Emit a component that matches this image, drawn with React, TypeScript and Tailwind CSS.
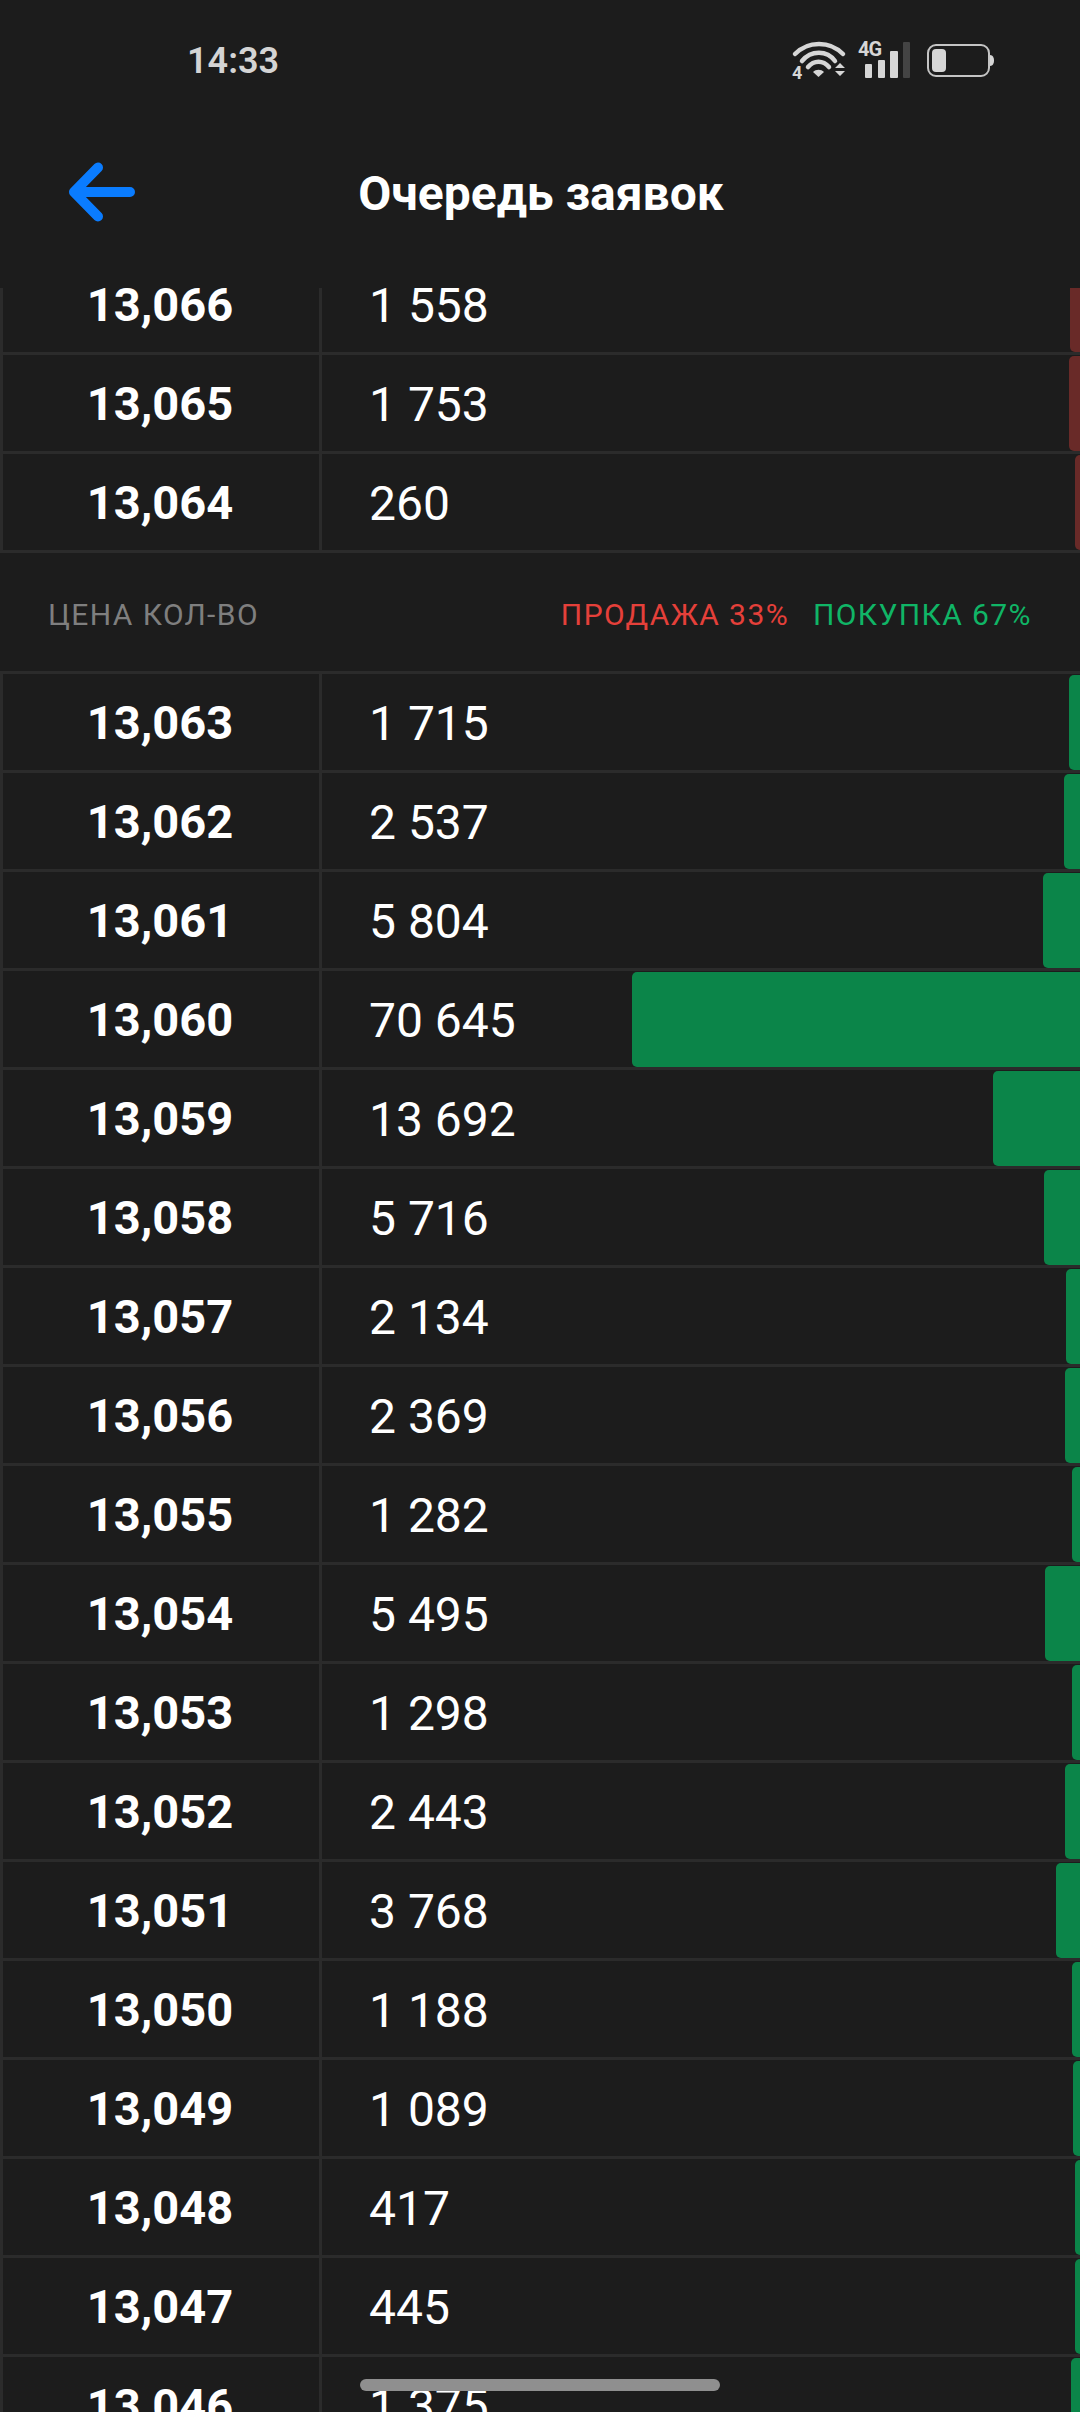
import React from "react";

const MAX_QTY = 70645;
const MAX_BAR = 448;

const SELLS = [
  { price: "13,066", qty: "1 558" },
  { price: "13,065", qty: "1 753" },
  { price: "13,064", qty: "260" },
];

const BUYS = [
  { price: "13,063", qty: "1 715" },
  { price: "13,062", qty: "2 537" },
  { price: "13,061", qty: "5 804" },
  { price: "13,060", qty: "70 645" },
  { price: "13,059", qty: "13 692" },
  { price: "13,058", qty: "5 716" },
  { price: "13,057", qty: "2 134" },
  { price: "13,056", qty: "2 369" },
  { price: "13,055", qty: "1 282" },
  { price: "13,054", qty: "5 495" },
  { price: "13,053", qty: "1 298" },
  { price: "13,052", qty: "2 443" },
  { price: "13,051", qty: "3 768" },
  { price: "13,050", qty: "1 188" },
  { price: "13,049", qty: "1 089" },
  { price: "13,048", qty: "417" },
  { price: "13,047", qty: "445" },
  { price: "13,046", qty: "1 375" },
];

function barWidth(qty: string) {
  const n = Number(qty.replace(/\s/g, ""));
  return Math.max(5, Math.round((n / MAX_QTY) * MAX_BAR));
}

function Row({ price, qty, side }: { price: string; qty: string; side: "buy" | "sell" }) {
  return (
    <div className="relative flex h-[99px] shrink-0 border-b-[3px] border-[#2b2b2b]">
      <div className="flex w-[322px] shrink-0 items-center justify-center border-x-[3px] border-[#2b2b2b] pt-[3px] pr-[2px] text-[47px] font-bold text-white">
        {price}
      </div>
      <div className="flex flex-1 items-center pt-[3px] pl-[47px] text-[48px] text-white">{qty}</div>
      {/* volume bar */}
      <div
        className={
          side === "buy"
            ? "absolute top-[1px] right-0 bottom-0 rounded-l-[5px] bg-[#0b8549]"
            : "absolute top-[1px] right-0 bottom-0 rounded-l-[5px] bg-[#692a28]"
        }
        style={{ width: barWidth(qty) }}
      />
    </div>
  );
}

function StatusIcons() {
  return (
    <svg width="206" height="52" viewBox="0 -4 206 52" fill="none" className="shrink-0">
      {/* wifi */}
      <g stroke="#d6d6d6" strokeWidth="4.5" strokeLinecap="round">
        <path d="M5 15C18 1.5 40 1.5 53 15" />
        <path d="M12 22C21 11 37 11 45 22" />
        <path d="M18 28C24 21 33 21 39 28" />
      </g>
      <path d="M28.5 38L23 33C26 30 31 30 34 33Z" fill="#d6d6d6" />
      <text x="2" y="40" fontSize="18" fontWeight="700" fill="#d6d6d6" fontFamily="Roboto, sans-serif">
        4
      </text>
      <path d="M45 29L50 24L55 29Z M45 32H55L50 37Z" fill="#d6d6d6" />
      {/* cell signal */}
      <text x="68" y="17" fontSize="20" fontWeight="700" fill="#d6d6d6" fontFamily="Roboto, sans-serif" letterSpacing="-1">
        4G
      </text>
      <rect x="75" y="25" width="7" height="14" rx="1" fill="#d6d6d6" />
      <rect x="88" y="21" width="7" height="18" rx="1" fill="#d6d6d6" />
      <rect x="100" y="12" width="8" height="27" rx="1" fill="#d6d6d6" />
      <rect x="113" y="3" width="7" height="36" rx="1" fill="#444444" />
      {/* battery */}
      <rect x="138" y="6" width="61" height="31" rx="8" stroke="#c4c4c4" strokeWidth="2" />
      <rect x="142" y="10" width="14" height="23" rx="4" fill="#d6d6d6" />
      <path d="M200 16C203 16 204 19 204 21.5C204 24 203 27 200 27Z" fill="#d6d6d6" />
    </svg>
  );
}

export default function App() {
  return (
    <div className="relative flex h-[2412px] w-[1080px] flex-col overflow-hidden bg-[#1c1c1c] font-['Roboto',sans-serif]">
      {/* Status bar */}
      <div className="flex h-[122px] shrink-0 items-center justify-between pr-[84px] pl-[187px]">
        <span className="text-[36px] font-semibold text-[#d4d4d4]">14:33</span>
        <StatusIcons />
      </div>

      {/* Nav */}
      <div className="relative flex h-[144px] shrink-0 items-center justify-center">
        <svg width="70" height="62" viewBox="0 0 70 62" fill="none" className="absolute top-[39px] left-[67px]">
          <path d="M63 31H7M31 6.5L7 31L31 55.5" stroke="#0a7cff" strokeWidth="10" strokeLinecap="round" strokeLinejoin="round" />
        </svg>
        <span className="pl-[2px] text-[48px] font-bold text-white">Очередь заявок</span>
      </div>

      {/* Sell side, scrolled under the nav */}
      <div className="mt-[22px] flex h-[265px] shrink-0 flex-col justify-end overflow-hidden">
        {SELLS.map((r) => (
          <Row key={r.price} {...r} side="sell" />
        ))}
      </div>

      {/* Column header */}
      <div className="flex h-[118px] shrink-0 items-center justify-between px-[48px] pt-[5px] text-[30px] tracking-[1.4px]">
        <span className="text-[#7f7f7f]">ЦЕНА КОЛ-ВО</span>
        <div className="flex gap-[24px]">
          <span className="text-[#e5403a]">ПРОДАЖА 33%</span>
          <span className="text-[#10b566]">ПОКУПКА 67%</span>
        </div>
      </div>

      {/* Buy side */}
      <div className="flex min-h-0 flex-1 flex-col overflow-hidden border-t-[3px] border-[#2b2b2b]">
        {BUYS.map((r) => (
          <Row key={r.price} {...r} side="buy" />
        ))}
      </div>

      {/* Home indicator */}
      <div className="absolute bottom-[21px] left-[360px] h-[12px] w-[360px] rounded-full bg-[#8f8f8f]" />
    </div>
  );
}
